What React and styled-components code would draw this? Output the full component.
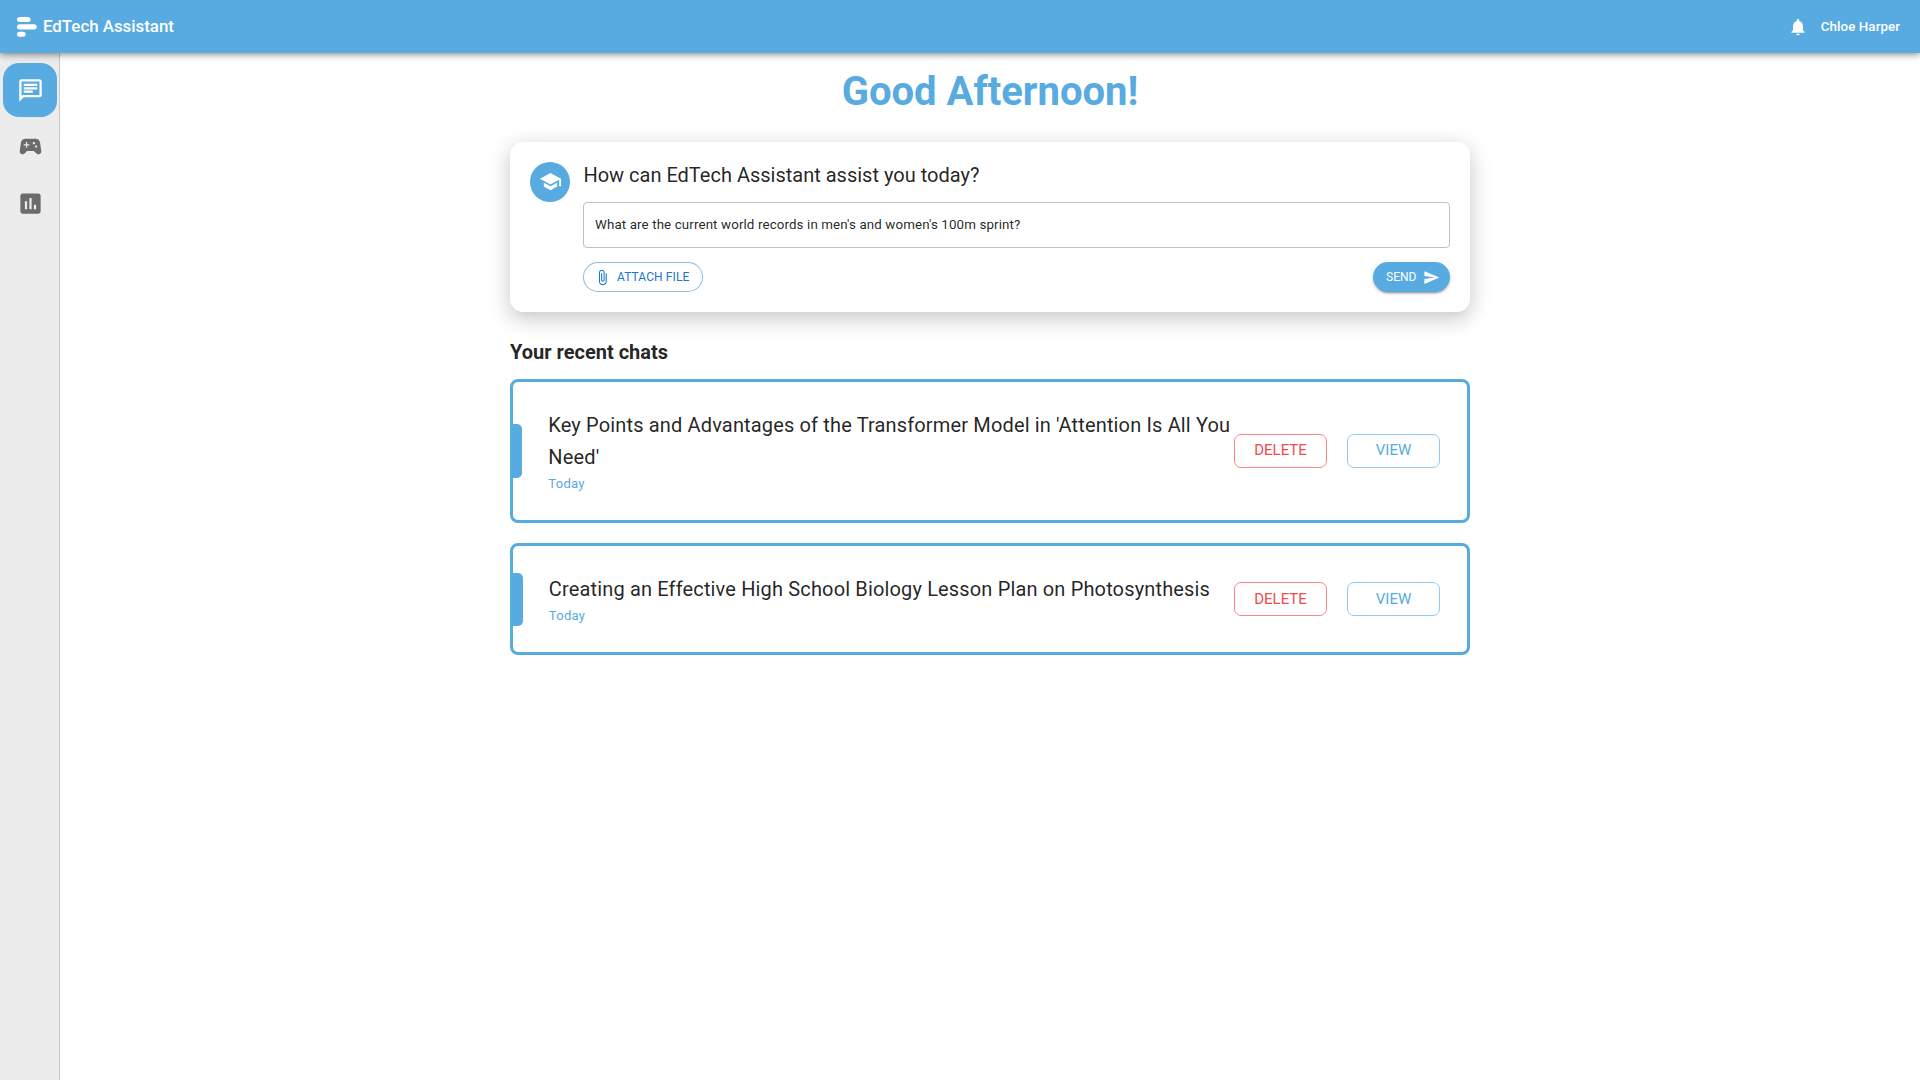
import React from "react";
import styled, { createGlobalStyle } from "styled-components";
import {
  MdOutlineChat,
  MdSportsEsports,
  MdAssessment,
  MdSchool,
  MdSend,
  MdNotifications,
  MdAttachFile,
} from "react-icons/md";

const brand = "#57abe0";

const GlobalStyle = createGlobalStyle`
  * { box-sizing: border-box; }
  body {
    margin: 0;
    background: #fff;
    color: rgba(0, 0, 0, 0.87);
    font-family: Roboto, "Liberation Sans", sans-serif;
  }
  button { font-family: inherit; cursor: pointer; }
`;

const Page = styled.div`
  display: flex;
  flex-direction: column;
  height: 100vh;
`;

const Header = styled.header`
  position: relative;
  z-index: 2;
  flex: none;
  height: 53px;
  display: flex;
  align-items: center;
  justify-content: space-between;
  padding: 0 20px 0 17px;
  background: ${brand};
  color: #fff;
  box-shadow: 0 2px 4px -1px rgba(0, 0, 0, 0.2), 0 4px 5px 0 rgba(0, 0, 0, 0.14),
    0 1px 10px 0 rgba(0, 0, 0, 0.12);
`;

const Brand = styled.div`
  display: flex;
  align-items: center;
  gap: 6px;
  font-size: 16.86px;
  font-weight: 500;
  line-height: 24px;
`;

const BrandName = styled.span`
  padding-bottom: 2px;
`;

const User = styled.div`
  display: flex;
  align-items: center;
  gap: 13px;
  font-size: 13.33px;
  font-weight: 500;
  line-height: 20px;
  letter-spacing: 0.08px;
`;

const Body = styled.div`
  flex: 1;
  display: flex;
`;

const Sidebar = styled.nav`
  width: 60px;
  flex: none;
  display: flex;
  flex-direction: column;
  align-items: flex-start;
  gap: 2.5px;
  padding: 10px 0 0 3px;
  background: #ececec;
  border-right: 1px solid #c8c8c8;
`;

const NavItem = styled.button`
  width: 54px;
  height: 54px;
  display: flex;
  align-items: center;
  justify-content: center;
  padding: 0 0 0 1px;
  border: 0;
  border-radius: 16px;
  font-size: 27px;
  background: ${(p) => (p.$active ? brand : "transparent")};
  color: ${(p) => (p.$active ? "#fff" : "#6c6c6c")};
`;

const Main = styled.main`
  flex: 1;
  display: flex;
  flex-direction: column;
  align-items: center;
`;

const Greeting = styled.h1`
  margin: 15px 0 27px;
  font-size: 40px;
  font-weight: 700;
  line-height: 47px;
  color: ${brand};
`;

const Column = styled.div`
  width: 960px;
`;

const AskCard = styled.section`
  display: flex;
  gap: 13px;
  height: 170px;
  padding: 20px;
  border-radius: 13px;
  background: #fff;
  box-shadow: 0 5px 5px -3px rgba(0, 0, 0, 0.03), 0 8px 20px 1px rgba(0, 0, 0, 0.13),
    0 3px 24px 2px rgba(0, 0, 0, 0.08);
`;

const Avatar = styled.div`
  width: 40px;
  height: 40px;
  flex: none;
  display: flex;
  align-items: center;
  justify-content: center;
  padding-bottom: 1px;
  border-radius: 50%;
  background: ${brand};
  color: #fff;
  font-size: 23px;
`;

const AskForm = styled.div`
  flex: 1;
`;

const Question = styled.h2`
  margin: 0 0 13px;
  padding-left: 0.4px;
  font-size: 20px;
  font-weight: 400;
  line-height: 27px;
`;

const PromptField = styled.div`
  height: 46px;
  display: flex;
  align-items: center;
  padding: 0 11px 2px;
  border: 1px solid #c0c0c0;
  border-radius: 4px;
  font-size: 13.33px;
  letter-spacing: 0.12px;
`;

const Actions = styled.div`
  display: flex;
  justify-content: space-between;
  margin-top: 14px;
`;

const PillButton = styled.button`
  height: 30px;
  display: flex;
  align-items: center;
  border-radius: 15px;
  font-size: 12px;
  line-height: 20px;
  text-transform: uppercase;
  white-space: nowrap;
`;

const AttachButton = styled(PillButton)`
  width: 120px;
  padding: 0 10px;
  gap: 6px;
  border: 1px solid rgba(25, 118, 210, 0.5);
  background: #fff;
  color: #1976d2;
  letter-spacing: 0.1px;
`;

const SendButton = styled(PillButton)`
  width: 77px;
  padding: 0 0 0 13px;
  gap: 6.5px;
  border: 0;
  background: ${brand};
  color: #fff;
  box-shadow: 0 3px 1px -2px rgba(0, 0, 0, 0.2), 0 2px 2px 0 rgba(0, 0, 0, 0.14),
    0 1px 5px 0 rgba(0, 0, 0, 0.12);
`;

const SectionTitle = styled.h3`
  margin: 28px 0 15px;
  font-size: 20px;
  font-weight: 700;
  line-height: 24px;
`;

const ChatList = styled.div`
  display: flex;
  flex-direction: column;
  gap: 20px;
`;

const ChatCard = styled.article`
  display: flex;
  align-items: center;
  padding-right: 27px;
  border: 3px solid ${brand};
  border-radius: 8px;
`;

const Marker = styled.span`
  width: ${(p) => p.$width}px;
  height: ${(p) => p.$height}px;
  flex: none;
  border-radius: 0 5px 5px 0;
  background: ${brand};
`;

const ChatText = styled.div`
  flex: 1;
  padding: 27px 0 27px ${(p) => p.$indent}px;
`;

const ChatTitle = styled.div`
  font-size: 20px;
  line-height: 32px;
  letter-spacing: 0.15px;
`;

const ChatDate = styled.div`
  padding-top: 2px;
  font-size: 13px;
  line-height: 18px;
  letter-spacing: 0.3px;
  color: ${brand};
`;

const ChatActions = styled.div`
  display: flex;
  gap: 20px;
`;

const ChatButton = styled.button`
  width: 93px;
  height: 34px;
  padding: 0 0 ${(p) => p.$lift}px;
  border: 1px solid ${(p) => (p.$danger ? "#fb8488" : "#90caf9")};
  border-radius: 7px;
  background: #fff;
  color: ${(p) => (p.$danger ? "#ef4b50" : brand)};
  font-size: 15px;
  text-transform: uppercase;
`;

const Logo = () => (
  <svg width="20" height="20" viewBox="0 0 20 20" fill="#fff">
    <rect x="0" y="0" width="13.5" height="5" rx="2.5" />
    <rect x="0" y="7.2" width="19.7" height="5.2" rx="2.6" />
    <rect x="0" y="14.8" width="8.6" height="5" rx="2.5" />
  </svg>
);

const chats = [
  {
    title: "Key Points and Advantages of the Transformer Model in 'Attention Is All You Need'",
    date: "Today",
    marker: [9, 54],
    indent: 26.3,
    lift: 2,
  },
  {
    title: "Creating an Effective High School Biology Lesson Plan on Photosynthesis",
    date: "Today",
    marker: [10, 53],
    indent: 25.8,
    lift: 1,
  },
];

export default function App() {
  return (
    <Page>
      <GlobalStyle />
      <Header>
        <Brand>
          <Logo />
          <BrandName>EdTech Assistant</BrandName>
        </Brand>
        <User>
          <MdNotifications size={20} />
          Chloe Harper
        </User>
      </Header>
      <Body>
        <Sidebar>
          <NavItem $active aria-label="Chat">
            <MdOutlineChat />
          </NavItem>
          <NavItem aria-label="Games">
            <MdSportsEsports />
          </NavItem>
          <NavItem aria-label="Reports">
            <MdAssessment />
          </NavItem>
        </Sidebar>
        <Main>
          <Greeting>Good Afternoon!</Greeting>
          <Column>
            <AskCard>
              <Avatar>
                <MdSchool />
              </Avatar>
              <AskForm>
                <Question>How can EdTech Assistant assist you today?</Question>
                <PromptField>
                  What are the current world records in men's and women's 100m sprint?
                </PromptField>
                <Actions>
                  <AttachButton>
                    <MdAttachFile size={17} />
                    Attach file
                  </AttachButton>
                  <SendButton>
                    Send
                    <MdSend size={17} />
                  </SendButton>
                </Actions>
              </AskForm>
            </AskCard>
            <SectionTitle>Your recent chats</SectionTitle>
            <ChatList>
              {chats.map((chat) => (
                <ChatCard key={chat.title}>
                  <Marker $width={chat.marker[0]} $height={chat.marker[1]} />
                  <ChatText $indent={chat.indent}>
                    <ChatTitle>{chat.title}</ChatTitle>
                    <ChatDate>{chat.date}</ChatDate>
                  </ChatText>
                  <ChatActions>
                    <ChatButton $danger $lift={chat.lift}>
                      Delete
                    </ChatButton>
                    <ChatButton $lift={chat.lift}>View</ChatButton>
                  </ChatActions>
                </ChatCard>
              ))}
            </ChatList>
          </Column>
        </Main>
      </Body>
    </Page>
  );
}
